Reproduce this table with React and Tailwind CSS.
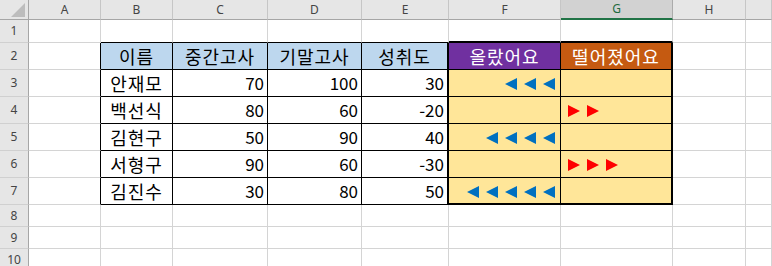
import React from 'react';

const LETTERS = ['A', 'B', 'C', 'D', 'E', 'F', 'G', 'H', ''];

// 스프레드시트 데이터 (B~E 열)
const students = [
  { name: '안재모', mid: 70, fin: 100, diff: 30 },
  { name: '백선식', mid: 80, fin: 60, diff: -20 },
  { name: '김현구', mid: 50, fin: 90, diff: 40 },
  { name: '서형구', mid: 90, fin: 60, diff: -30 },
  { name: '김진수', mid: 30, fin: 80, diff: 50 },
];

const RIGHT = {
  grey: 'border-r border-r-[#d4d4d4]',
  black: 'border-r border-r-black',
  thick: 'border-r-2 border-r-black',
};
const BOTTOM = {
  grey: 'border-b border-b-[#d4d4d4]',
  black: 'border-b border-b-black',
  thick: 'border-b-2 border-b-black',
};

const rightStyle = (col, row) => {
  if (row < 2 || row > 7) return 'grey';
  if (col <= 3) return 'black';
  if (col === 4) return 'thick';
  if (col === 5) return 'black';
  if (col === 6) return 'thick';
  return 'grey';
};

const bottomStyle = (col, row) => {
  if (col < 1 || col > 6) return 'grey';
  if (row === 1 || row === 7) return col >= 5 ? 'thick' : 'black';
  if (row >= 2 && row <= 6) return 'black';
  return 'grey';
};

const LeftArrow = () => (
  <svg width="12" height="12" viewBox="0 0 12 12" className="shrink-0">
    <polygon points="0,6 12,0 12,12" fill="#0070C0" />
  </svg>
);

const RightArrow = () => (
  <svg width="12" height="12" viewBox="0 0 12 12" className="shrink-0">
    <polygon points="0,0 12,6 0,12" fill="#FF0000" />
  </svg>
);

const Cell = ({ col, row, className = '', children }) => (
  <div
    className={`flex items-center overflow-hidden ${RIGHT[rightStyle(col, row)]} ${BOTTOM[bottomStyle(col, row)]} ${className}`}
  >
    {children}
  </div>
);

const KO = 'text-[18px] tracking-[1px] leading-[25px]';

const getContent = (col, row) => {
  if (row === 2) {
    const heads = ['', '이름', '중간고사', '기말고사', '성취도', '올랐어요', '떨어졌어요'];
    if (col >= 1 && col <= 4) return { text: heads[col], ko: true, cls: 'justify-center bg-[#bdd7ee]' };
    if (col === 5) return { text: heads[col], ko: true, cls: 'justify-center bg-[#7030a0] text-white' };
    if (col === 6) return { text: heads[col], ko: true, cls: 'justify-center bg-[#c55a11] text-white' };
    return null;
  }
  if (row >= 3 && row <= 7) {
    const s = students[row - 3];
    if (col === 1) return { text: s.name, ko: true, cls: 'justify-center' };
    if (col === 2) return { text: s.mid, cls: 'justify-end pr-[3px]' };
    if (col === 3) return { text: s.fin, cls: 'justify-end pr-[3px]' };
    if (col === 4) return { text: s.diff, cls: 'justify-end pr-[3px]' };
    if (col === 5) {
      const n = s.diff > 0 ? s.diff / 10 : 0;
      return {
        node: (
          <div className="flex gap-[7px] mt-[2px]">
            {Array.from({ length: n }).map((_, i) => <LeftArrow key={i} />)}
          </div>
        ),
        cls: 'justify-end pr-[5px] bg-[#ffe699]',
      };
    }
    if (col === 6) {
      const n = s.diff < 0 ? -s.diff / 10 : 0;
      return {
        node: (
          <div className="flex gap-[7px] mt-[2px]">
            {Array.from({ length: n }).map((_, i) => <RightArrow key={i} />)}
          </div>
        ),
        cls: 'justify-start pl-[7px] bg-[#ffe699]',
      };
    }
  }
  return null;
};

export default function App() {
  const rows = [1, 2, 3, 4, 5, 6, 7, 8, 9, 10];

  return (
    <div className="w-[772px] h-[266px] overflow-hidden bg-white text-black text-[17px] font-['Noto_Sans_CJK_KR',sans-serif]">
      <div className="grid grid-cols-[29px_72px_72px_95px_94px_87px_112px_112px_73px_1fr] grid-rows-[20px_23px_27px_27px_27px_27px_27px_27px_22px_22px_22px]">
        {/* corner */}
        <div className="relative bg-[#e6e6e6] border-r border-r-[#a6a6a6] border-b border-b-[#a6a6a6]">
          <svg width="14" height="14" viewBox="0 0 14 14" className="absolute right-[3px] bottom-[2px]">
            <polygon points="14,0 14,14 0,14" fill="#bdbdbd" />
          </svg>
        </div>

        {/* column headers */}
        {LETTERS.map((l, i) =>
          l === 'G' ? (
            <div
              key={i}
              className="flex items-center justify-center bg-[#d2d2d2] border-r border-r-[#ababab] border-b-2 border-b-[#217346] text-[12px] text-[#1e6b40] font-['Noto_Sans',sans-serif]"
            >
              {l}
            </div>
          ) : (
            <div
              key={i}
              className="flex items-center justify-center bg-[#e6e6e6] border-r border-r-[#c6c6c6] border-b border-b-[#a6a6a6] text-[12px] text-[#444] font-['Noto_Sans',sans-serif]"
            >
              {l}
            </div>
          )
        )}

        {rows.map((row) => (
          <React.Fragment key={row}>
            <div className="flex items-center justify-center bg-[#e6e6e6] border-r border-r-[#a6a6a6] border-b border-b-[#d0d0d0] text-[12px] text-[#444] font-['Noto_Sans',sans-serif]">
              {row}
            </div>
            {LETTERS.map((_, col) => {
              const c = getContent(col, row);
              return (
                <Cell key={col} col={col} row={row} className={c ? c.cls : ''}>
                  {c && (c.node || <span className={c.ko ? KO : ''}>{c.text}</span>)}
                </Cell>
              );
            })}
          </React.Fragment>
        ))}
      </div>
    </div>
  );
}
